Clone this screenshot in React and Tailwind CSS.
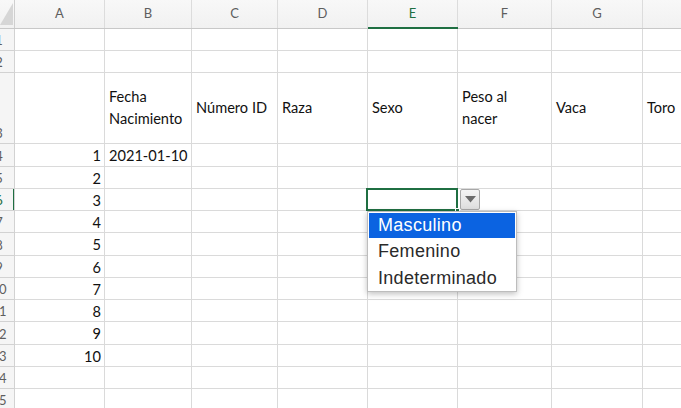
import React from "react";

const cols = [
  { l: "A", w: "w-[90px]" },
  { l: "B", w: "w-[87px]" },
  { l: "C", w: "w-[86px]" },
  { l: "D", w: "w-[90px]" },
  { l: "E", w: "w-[90px]" },
  { l: "F", w: "w-[94px]" },
  { l: "G", w: "w-[91px]" },
  { l: "", w: "w-[90px]" },
];

const rowHeights = [
  "h-[22px]", "h-[22px]", "h-[71px]", "h-[23px]", "h-[22px]", "h-[22px]", "h-[22px]",
  "h-[23px]", "h-[22px]", "h-[22px]", "h-[22px]", "h-[23px]", "h-[22px]", "h-[22px]", "h-[22px]", "h-[22px]",
];

const headers = {
  1: "Fecha\nNacimiento",
  2: "Número ID",
  3: "Raza",
  4: "Sexo",
  5: "Peso al\nnacer",
  6: "Vaca",
  7: "Toro",
};

function Dropdown() {
  const items = ["Masculino", "Femenino", "Indeterminado"];
  return (
    <>
      <div className="absolute left-[-2px] top-[-1px] w-[92px] h-[23px] border-2 border-[#1f6f42] z-10 pointer-events-none">
        <div className="absolute right-[-4px] bottom-[-4px] w-[5px] h-[5px] bg-[#1f6f42] border border-white" />
      </div>
      <div className="absolute left-[92px] top-0 w-[20px] h-[21px] z-10 rounded-[2px] border border-[#a8a8a8] bg-gradient-to-b from-[#f4f4f4] to-[#dedede] flex items-center justify-center">
        <svg width="11" height="7" viewBox="0 0 11 7">
          <polygon points="0,0 11,0 5.5,6.5" fill="#6b6b6b" />
        </svg>
      </div>
      <div
        className="absolute left-[-1px] top-[22px] w-[150px] h-[81px] z-20 bg-white border border-[#bdbdbd] shadow-[0_2px_6px_rgba(0,0,0,0.25)] pt-[1px] px-[1px] flex flex-col"
        style={{ fontFamily: '"Liberation Sans", Arial, sans-serif' }}
      >
        {items.map((t, i) => (
          <div
            key={t}
            className={
              (i === 0 ? "h-[25px] bg-[#0b63e1] text-white " : "h-[27px] text-[#2a2a2a] ") +
              "flex items-center pl-[9px] text-[18px] tracking-[0.3px] leading-none"
            }
          >
            {t}
          </div>
        ))}
      </div>
    </>
  );
}

export default function App() {
  return (
    <div
      className="w-[681px] h-[408px] overflow-hidden bg-white text-[#111]"
      style={{ fontFamily: 'Lato, "Open Sans", sans-serif' }}
    >
      {/* column header */}
      <div className="flex h-[29px] bg-gradient-to-b from-[#f8f8f8] to-[#f1f1f1] border-b border-[#c8c8c8]">
        <div className="w-[15px] shrink-0 border-r border-[#cfcfcf] relative">
          <svg width="14" height="28" viewBox="0 0 14 28" className="absolute left-0 top-0">
            <polygon points="13,3 13,25 0,25" fill="#d6d6d6" />
          </svg>
        </div>
        {cols.map((c, i) => (
          <div
            key={i}
            className={
              c.w +
              " shrink-0 relative border-r border-[#dcdcdc] flex items-center justify-center text-[13px] " +
              (c.l === "E" ? "text-[#1f6f42]" : "text-[#5e5e5e]")
            }
          >
            {c.l}
            {c.l === "E" && <div className="absolute left-0 right-[-1px] bottom-[-1px] h-[2px] bg-[#1f6f42]" />}
          </div>
        ))}
      </div>
      {rowHeights.map((h, r) => {
        const rowNum = r + 1;
        const isSel = rowNum === 6;
        return (
          <div key={r} className={"flex " + h}>
            <div className="w-[15px] shrink-0 relative overflow-hidden bg-[#f5f5f5] border-r border-b border-[#d2d2d2] flex items-end pb-[1px]">
              <div
                className={
                  "w-[30px] ml-[-16px] text-center text-[13px] leading-[18px] shrink-0 " +
                  (isSel ? "text-[#1f6f42]" : "text-[#5e5e5e]")
                }
              >
                {rowNum}
              </div>
              {isSel && <div className="absolute right-[-1px] top-0 bottom-0 w-[2px] bg-[#1f6f42]" />}
            </div>
            {cols.map((c, ci) => {
              let content = null;
              let align = "justify-start pl-[4px]";
              if (rowNum === 3 && headers[ci]) {
                content = (
                  <div className="whitespace-pre-line leading-[22px]">{headers[ci]}</div>
                );
              }
              if (ci === 0 && rowNum >= 4 && rowNum <= 13) {
                content = rowNum - 3;
                align = "justify-end pr-[3px]";
              }
              if (ci === 1 && rowNum === 4) {
                content = "2021-01-10";
              }
              const sel = isSel && ci === 4;
              return (
                <div
                  key={ci}
                  className={
                    c.w +
                    " shrink-0 relative border-r border-b border-[#dadada] flex items-center text-[14.6px] leading-[20px] " +
                    (rowNum === 3 ? "" : "pt-[2px] ") +
                    align
                  }
                >
                  {content}
                  {sel && <Dropdown />}
                </div>
              );
            })}
          </div>
        );
      })}
    </div>
  );
}
